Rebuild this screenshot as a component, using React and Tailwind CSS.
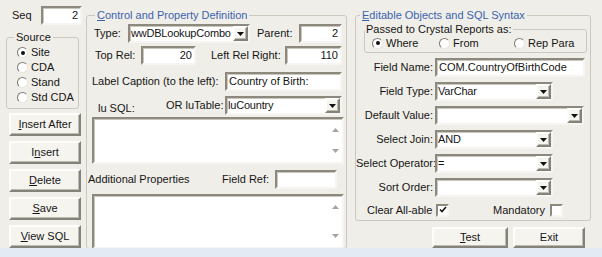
import React from "react";

const sunken =
  "bg-white border-2 border-t-[#8d897f] border-l-[#8d897f] border-b-[#f6f5f1] border-r-[#f6f5f1] shadow-[inset_1px_1px_0_#c9c6bc]";
const raised =
  "bg-[#f5f4ef] border-2 border-t-[#fdfdfb] border-l-[#fdfdfb] border-b-[#858279] border-r-[#858279] shadow-[inset_-1px_-1px_0_#bdbab0]";

function Box({ className = "", right, children }) {
  return (
    <div className={`${sunken} flex items-center px-[2px] h-[19px] ${right ? "justify-end" : ""} ${className}`}>
      {children}
    </div>
  );
}

function Arrow() {
  return (
    <svg width="7" height="4" viewBox="0 0 7 4">
      <path d="M0 0h7L3.5 4z" fill="#111" />
    </svg>
  );
}

function Combo({ className = "", children }) {
  return (
    <div className={`${sunken} flex items-center h-[19px] ${className}`}>
      <span className="flex-1 pl-[1px] whitespace-nowrap overflow-hidden tracking-[-0.2px]">{children}</span>
      <span className={`${raised} w-[15px] h-[15px] shrink-0 flex items-center justify-center`}>
        <Arrow />
      </span>
    </div>
  );
}

function Memo({ className = "" }) {
  return (
    <div className={`${sunken} flex justify-end ${className}`}>
      <div className="w-[14px] flex flex-col justify-between items-center py-[9px]">
        <svg width="7" height="4" viewBox="0 0 7 4">
          <path d="M0 4h7L3.5 0z" fill="#a8a59c" />
        </svg>
        <svg width="7" height="4" viewBox="0 0 7 4">
          <path d="M0 0h7L3.5 4z" fill="#a8a59c" />
        </svg>
      </div>
    </div>
  );
}

function Btn({ className = "", children }) {
  return (
    <div className={`${raised} flex items-center justify-center ${className}`}>{children}</div>
  );
}

function Radio({ on, label, className = "" }) {
  return (
    <div className={`flex items-center gap-[3px] h-[15px] ${className}`}>
      <span className="w-[11px] h-[11px] rounded-full bg-white border border-t-[#7d7a72] border-l-[#7d7a72] border-b-[#e9e7e0] border-r-[#e9e7e0] flex items-center justify-center">
        {on && <span className="w-[4px] h-[4px] rounded-full bg-[#111]" />}
      </span>
      <span>{label}</span>
    </div>
  );
}

function Check({ on }) {
  return (
    <span className="w-[13px] h-[13px] bg-white border-2 border-t-[#8d897f] border-l-[#8d897f] border-b-[#f6f5f1] border-r-[#f6f5f1] flex items-center justify-center">
      {on && (
        <svg width="8" height="8" viewBox="0 0 8 8">
          <path d="M1 3.5l2 2 4-4.5" stroke="#111" strokeWidth="1.6" fill="none" />
        </svg>
      )}
    </span>
  );
}

const group = "border border-[#cbc8bd] rounded-[3px] min-w-0";

function LeftColumn() {
  return (
    <div className="w-[86px] flex flex-col shrink-0">
      <div className="flex items-center mt-[6px]">
        <span className="ml-[12px] w-[29px]">Seq</span>
        <Box right className="w-[41px]">2</Box>
      </div>
      <fieldset className={`${group} ml-[6px] mt-[6px] w-[73px] h-[78px]`}>
        <legend className="ml-[7px] px-[2px]">Source</legend>
        <div className="pl-[10px] pt-[1px]">
          <Radio on label="Site" />
          <Radio label="CDA" />
          <Radio label="Stand" />
          <Radio label="Std CDA" />
        </div>
      </fieldset>
      <div className="ml-[9px] w-[72px] mt-[4px] flex flex-col gap-[5px]">
        <Btn className="h-[23px]"><span><u>I</u>nsert After</span></Btn>
        <Btn className="h-[23px]"><span>I<u>n</u>sert</span></Btn>
        <Btn className="h-[23px]"><span><u>D</u>elete</span></Btn>
        <Btn className="h-[23px]"><span><u>S</u>ave</span></Btn>
        <Btn className="h-[23px]"><span><u>V</u>iew SQL</span></Btn>
      </div>
    </div>
  );
}

function ControlGroup() {
  return (
    <fieldset className={`${group} mt-[9px] w-[261px] h-[240px] shrink-0`}>
      <legend className="ml-[8px] px-[2px] text-[#3b63ae]"><u>C</u>ontrol and Property Definition</legend>
      <div className="flex items-center mt-[2px] pl-[7px]">
        <span className="w-[34px]">Type:</span>
        <Combo className="w-[122px]">wwDBLookupCombo</Combo>
        <span className="ml-[7px] w-[42px]">Parent:</span>
        <Box right className="w-[43px]">2</Box>
      </div>
      <div className="flex items-center mt-[3px] pl-[8px]">
        <span className="w-[46px]">Top Rel:</span>
        <Box right className="w-[55px]">20</Box>
        <span className="ml-[15px] w-[74px]">Left Rel Right:</span>
        <Box right className="w-[57px]">110</Box>
      </div>
      <div className="flex items-center mt-[7px] pl-[5px]">
        <span className="w-[133px]">Label Caption (to the left):</span>
        <Box className="w-[117px]">Country of Birth:</Box>
      </div>
      <div className="flex items-center mt-[5px] pl-[11px]">
        <span className="w-[68px] pt-[6px]">lu SQL:</span>
        <span className="w-[59px]">OR luTable:</span>
        <Combo className="w-[117px]">luCountry</Combo>
      </div>
      <Memo className="mt-[2px] ml-[5px] w-[252px] h-[47px]" />
      <div className="flex items-center mt-[6px] pl-[1px]">
        <span className="w-[134px]">Additional Properties</span>
        <span className="w-[53px]">Field Ref:</span>
        <Box className="w-[62px] h-[18px]" />
      </div>
      <Memo className="mt-[5px] ml-[5px] w-[252px] h-[55px]" />
    </fieldset>
  );
}

function Row({ label, children }) {
  return (
    <div className="flex items-center">
      <span className="w-[77px] text-right mr-[2px] whitespace-nowrap">{label}</span>
      {children}
    </div>
  );
}

function SyntaxGroup() {
  return (
    <div className="ml-[8px] w-[236px] flex flex-col shrink-0">
      <fieldset className={`${group} mt-[9px] h-[212px]`}>
        <legend className="ml-[4px] px-[2px] text-[#3b63ae]"><u>E</u>ditable Objects and SQL Syntax</legend>
        <fieldset className={`${group} mt-[1px] ml-[8px] w-[223px] h-[30px]`}>
          <legend className="ml-0 px-[1px]">Passed to Crystal Reports as:</legend>
          <div className="flex items-center pl-[7px] h-[14px]">
            <Radio on label="Where" className="w-[67px]" />
            <Radio label="From" className="w-[75px]" />
            <Radio label="Rep Para" />
          </div>
        </fieldset>
        <div className="flex flex-col gap-[5px] mt-[5px]">
          <Row label="Field Name:"><Box className="w-[150px]">COM.CountryOfBirthCode</Box></Row>
          <Row label="Field Type:"><Combo className="w-[118px]">VarChar</Combo></Row>
          <Row label="Default Value:"><Combo className="w-[149px]" /></Row>
          <Row label="Select Join:"><Combo className="w-[118px]">AND</Combo></Row>
          <Row label="Select Operator:"><Combo className="w-[118px]">=</Combo></Row>
          <Row label="Sort Order:"><Combo className="w-[118px]" /></Row>
        </div>
        <div className="flex items-center mt-[6px] pl-[11px] h-[14px]">
          <span className="w-[69px]">Clear All-able</span>
          <Check on />
          <span className="ml-[44px] w-[57px]">Mandatory</span>
          <Check />
        </div>
      </fieldset>
      <div className="flex gap-[5px] mt-[6px] ml-[77px]">
        <Btn className="w-[76px] h-[21px]"><span><u>T</u>est</span></Btn>
        <Btn className="w-[72px] h-[21px]">Exit</Btn>
      </div>
    </div>
  );
}

export default function App() {
  return (
    <div className="w-[602px] h-[257px] overflow-hidden bg-[#f0eee8] flex flex-col text-[11px] leading-[13px] text-[#151515] font-['Liberation_Sans',Arial,sans-serif]">
      <div className="flex h-[248px]">
        <LeftColumn />
        <ControlGroup />
        <SyntaxGroup />
      </div>
      <div className="h-[9px] bg-[#e4eaf4]" />
    </div>
  );
}
